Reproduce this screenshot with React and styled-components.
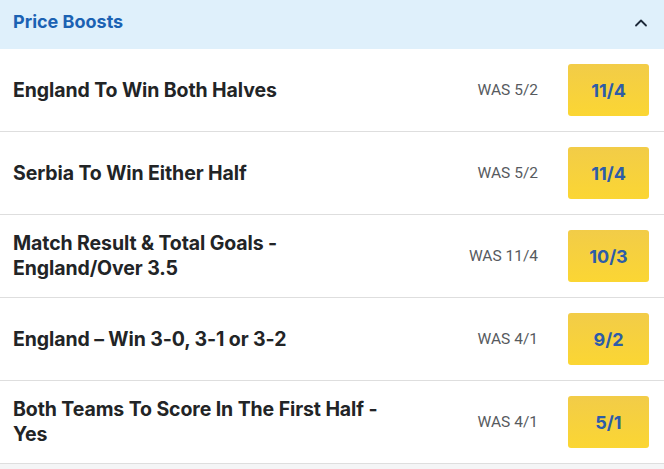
import React from "react";
import styled, { createGlobalStyle } from "styled-components";

const GlobalStyle = createGlobalStyle`
  body {
    margin: 0;
    background: #f4f5f6;
    font-family: Inter, "Noto Sans", sans-serif;
  }
`;

const boosts = [
  { name: "England To Win Both Halves", was: "5/2", price: "11/4" },
  { name: "Serbia To Win Either Half", was: "5/2", price: "11/4" },
  { name: "Match Result & Total Goals - England/Over 3.5", was: "11/4", price: "10/3" },
  { name: "England \u2013 Win 3-0, 3-1 or 3-2", was: "4/1", price: "9/2" },
  { name: "Both Teams To Score In The First Half - Yes", was: "4/1", price: "5/1" },
];

export default function App() {
  return (
    <>
      <GlobalStyle />
      <Panel>
        <Header>
          <HeaderTitle>Price Boosts</HeaderTitle>
          <svg width="16" height="16" viewBox="0 0 16 16" fill="none">
            <path d="M3 10.5 L8 5.5 L13 10.5" stroke="#1d2a3a" strokeWidth="1.8" strokeLinecap="round" strokeLinejoin="round" />
          </svg>
        </Header>
        {boosts.map((b) => (
          <Row key={b.name}>
            <Name>{b.name}</Name>
            <Was>WAS {b.was}</Was>
            <Price>{b.price}</Price>
          </Row>
        ))}
      </Panel>
    </>
  );
}

const Panel = styled.div`
  width: 664px;
  background: #ffffff;
`;

const Header = styled.div`
  height: 49px;
  box-sizing: border-box;
  padding: 0 15px 0 13px;
  background: #dff0fb;
  display: flex;
  align-items: center;
  justify-content: space-between;
  svg {
    margin-top: -4px;
  }
`;

const HeaderTitle = styled.div`
  font-size: 18px;
  font-weight: 700;
  color: #1b62b3;
  margin-top: -6px;
`;

const Row = styled.div`
  height: 83px;
  box-sizing: border-box;
  padding: 0 15px 0 13px;
  border-bottom: 1px solid #dedede;
  display: flex;
  align-items: center;
`;

const Name = styled.div`
  width: 392px;
  font-size: 19.5px;
  font-weight: 700;
  line-height: 25px;
  letter-spacing: -0.1px;
  color: #222426;
`;

const Was = styled.div`
  margin-left: auto;
  margin-right: 30px;
  font-family: Roboto, "Liberation Sans", sans-serif;
  font-size: 15.5px;
  color: #575a5e;
`;

const Price = styled.div`
  width: 81px;
  height: 52px;
  border-radius: 3px;
  background: linear-gradient(180deg, #f2cc48 0%, #fbd633 100%);
  display: flex;
  align-items: center;
  justify-content: center;
  font-size: 18px;
  font-weight: 700;
  color: #2d5ca8;
`;
